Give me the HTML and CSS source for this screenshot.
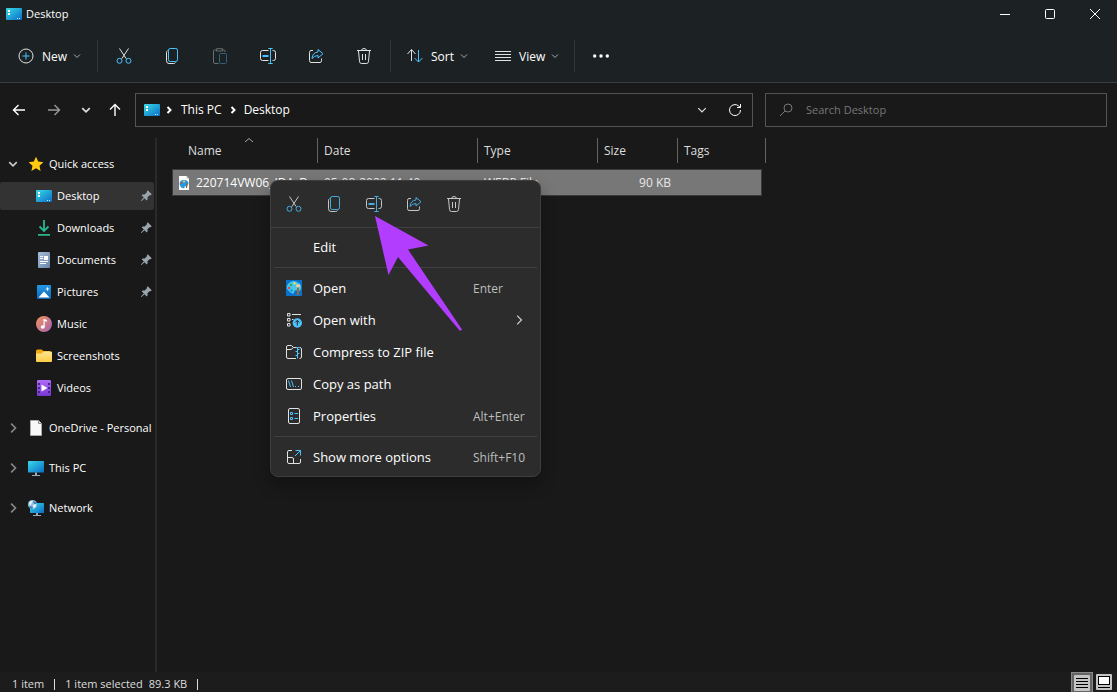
FILE: index.html
```html
<!DOCTYPE html>
<html lang="en">
<head>
<meta charset="utf-8">
<title>Desktop</title>
<link rel="stylesheet" href="styles.css">
</head>
<body>
<svg class="sprite" aria-hidden="true">
  <defs>
    <linearGradient id="g-screen" x1="0" y1="0" x2="1" y2="1"><stop offset="0" stop-color="#38dbe8"/><stop offset="1" stop-color="#0a6cc8"/></linearGradient>
    <linearGradient id="g-music" x1="0" y1="0" x2="1" y2="1"><stop offset="0" stop-color="#f5925a"/><stop offset="1" stop-color="#a562b4"/></linearGradient>
    <linearGradient id="g-doc" x1="0" y1="0" x2="1" y2="1"><stop offset="0" stop-color="#a9bfd8"/><stop offset="1" stop-color="#6784a8"/></linearGradient>
    <linearGradient id="g-pic" x1="0" y1="0" x2="0" y2="1"><stop offset="0" stop-color="#2598e8"/><stop offset="1" stop-color="#0967b8"/></linearGradient>
    <linearGradient id="g-folder" x1="0" y1="0" x2="0" y2="1"><stop offset="0" stop-color="#ffe592"/><stop offset="1" stop-color="#ffcd45"/></linearGradient>
    <linearGradient id="g-video" x1="0" y1="0" x2="0" y2="1"><stop offset="0" stop-color="#b06cf5"/><stop offset="1" stop-color="#7437cf"/></linearGradient>
    <symbol id="i-desktop" viewBox="0 0 16 16"><rect y="2" width="16" height="12" rx="1" fill="url(#g-screen)"/><path d="M2 4h2v2H2zM2 7h2v2H2z" fill="#fff"/><path d="M11 12h1v1h-1zM13 12h1v1h-1z" fill="#cfe9ff"/></symbol>
    <symbol id="i-plus" viewBox="0 0 16 16"><circle cx="8" cy="8" r="7" class="w"/><path d="M8 4.500v7M4.500 8h7" class="b"/></symbol>
    <symbol id="i-cut" viewBox="0 0 16 16"><path d="M3.5.5l6.700 10.200M12.500.5L5.800 10.700" class="w"/><circle cx="3.500" cy="12.800" r="2.500" class="b"/><circle cx="12.500" cy="12.800" r="2.500" class="b"/></symbol>
    <symbol id="i-copy" viewBox="0 0 16 16"><path d="M3.500 2.500Q2.500 3 2.500 4.800v8Q2.500 15.500 5 15.500h4.700Q11 15.500 11.500 14.500" class="w"/><rect x="4.500" y=".5" width="9" height="13" rx="1.700" class="b"/></symbol>
    <symbol id="i-paste" viewBox="0 0 16 16"><path d="M4.500 2H2.500Q1.500 2 1.500 3v11q0 1.500 1.500 1.500h3.500M10.500 2h1.500q1 0 1 1v1M4.500.700h6v2.300h-6z" stroke="#686d6f" fill="none"/><rect x="7.500" y="5.500" width="7" height="10" rx="1" stroke="#315f77" fill="none"/></symbol>
    <symbol id="i-rename" viewBox="0 0 16 16"><path d="M8.500 2.500H2.500Q.5 2.500.5 4.500v6q0 2 2 2h6M12.500 2.500h1q2 0 2 2v6q0 2-2 2h-1" class="w"/><path d="M8.300.5h4.400M8.300 15.500h4.400M10.500.5v15" class="b"/><path d="M2.500 8h6" class="b" stroke-width="2"/></symbol>
    <symbol id="i-share" viewBox="0 0 16 16"><path d="M5 2.500H3q-1.500 0-1.500 2v8q0 2 1.500 2h9q1.500 0 1.500-2v-2" class="w"/><path d="M10 1.500l5 4.200-5 4.300V7.500q-3.500 0-6 3 .5-6 6-6.500z" class="b"/></symbol>
    <symbol id="i-bin" viewBox="0 0 16 16"><path d="M1 2.500h14M5.500 2.500Q5.700.500 8 .500T10.500 2.500M2.500 3l1 10.500q.2 2 2 2h5q1.800 0 2-2l1-10.500M6.500 6v6M9.500 6v6" class="w"/></symbol>
    <symbol id="i-sort" viewBox="0 0 16 16"><path d="M4.500 13V2M.5 6l4-4.500 4 4.500" class="w"/><path d="M11.500 2v12M7.500 10l4 4 4-4" class="b"/></symbol>
    <symbol id="i-view" viewBox="0 0 16 16"><path d="M0 3.500h16M0 6.500h16M0 9.500h16M0 12.500h16" class="w"/></symbol>
    <symbol id="i-dots" viewBox="0 0 16 16"><circle cx="1.700" cy="8" r="1.700" fill="#fff"/><circle cx="8" cy="8" r="1.700" fill="#fff"/><circle cx="14.300" cy="8" r="1.700" fill="#fff"/></symbol>
    <symbol id="i-chev" viewBox="0 0 8 8"><path d="M1 2.500l3 3 3-3" class="c"/></symbol>
    <symbol id="i-right" viewBox="0 0 8 8"><path d="M2.500.5L6 4 2.500 7.500" class="c"/></symbol>
    <symbol id="i-crumb" viewBox="0 0 8 8"><path d="M2.500 1L5.500 4 2.500 7" class="c"/></symbol>
    <symbol id="i-left-arrow" viewBox="0 0 16 16"><path d="M14 8H2.500M7.500 3l-5 5 5 5" class="c"/></symbol>
    <symbol id="i-right-arrow" viewBox="0 0 16 16"><path d="M2 8h11.500M8.500 3l5 5-5 5" class="c"/></symbol>
    <symbol id="i-up-arrow" viewBox="0 0 16 16"><path d="M8 14V2.500M3 7.500l5-5 5 5" class="c"/></symbol>
    <symbol id="i-refresh" viewBox="0 0 16 16"><path d="M13.500 8A5.500 5.500 0 1 1 11.700 4l1.500 1.300M13.500 2v3.500H10" class="c"/></symbol>
    <symbol id="i-search" viewBox="0 0 16 16"><circle cx="10" cy="6" r="4" class="c"/><path d="M7 9l-5 5" class="c"/></symbol>
    <symbol id="i-star" viewBox="0 0 16 16"><path d="M8 .8l2.200 4.800 5.200.6-3.900 3.500 1.100 5.200L8 12.300l-4.600 2.600 1.100-5.200L.6 6.200l5.200-.6z" fill="#ffca10"/></symbol>
    <symbol id="i-pin" viewBox="0 0 16 16"><path d="M10 1.500l4.500 4.500-1 1-1-.2-2.800 2.700.1 2.500-1 1-2.500-2.500L3 13.800l-.8-.8 3.300-3.300L3 7.200l1-1 2.500.1L9.200 3.500l-.2-1z" fill="#98a5ad"/></symbol>
    <symbol id="i-down" viewBox="0 0 16 16"><path d="M8 0v11M3.500 6.500L8 11l4.500-4.500M2 14.800h12" stroke="#2bb78d" stroke-width="1.800" fill="none"/></symbol>
    <symbol id="i-doc" viewBox="0 0 16 16"><rect x="2" width="12" height="16" rx="1" fill="url(#g-doc)"/><path d="M4 4h3v1H4zM4 6h3v1H4zM8 4h4v4H8zM4 9h8v1H4zM4 11h6v1H4z" fill="#fff"/></symbol>
    <symbol id="i-pic" viewBox="0 0 16 16"><rect x="1" y="1" width="14" height="14" rx="1" fill="url(#g-pic)"/><path d="M2.500 13.500L8 7.500l5.500 6z" fill="#fff"/><path d="M11.500 2.500l.6 1.900 1.900.6-1.900.6-.6 1.900-.6-1.900L9 5l1.900-.6z" fill="#fff"/></symbol>
    <symbol id="i-music" viewBox="0 0 16 16"><circle cx="8" cy="8" r="8" fill="url(#g-music)"/><ellipse cx="6.700" cy="11" rx="2" ry="1.700" fill="#fff"/><path d="M7.500 3h1l2.500 1.300v1.500L8.700 5v6H7.500z" fill="#fff"/></symbol>
    <symbol id="i-folder" viewBox="0 0 16 16"><path d="M0 3q0-1.500 1.500-1.500h4L7.500 3H14v3H0z" fill="#f2a90c"/><path d="M0 5.500h5.500l2-2H15q1 0 1 1V13q0 1-1 1H1q-1 0-1-1z" fill="url(#g-folder)"/></symbol>
    <symbol id="i-video" viewBox="0 0 16 16"><rect x="1" width="14" height="16" rx="1" fill="url(#g-video)"/><path d="M2 3h2v2H2zM2 7h2v2H2zM2 11h2v2H2zM12 3h2v2h-2zM12 7h2v2h-2zM12 11h2v2h-2z" fill="#4b2092"/><path d="M5.500 4.500v7l6-3.500z" fill="#fff"/></symbol>
    <symbol id="i-page" viewBox="0 0 16 16"><path d="M2.500.5h8L13.500 3.500v12h-11z" fill="#f8f8f8" stroke="#aaa"/><path d="M10.500.5v3h3" fill="#ddd" stroke="#888"/></symbol>
    <symbol id="i-pc" viewBox="0 0 16 16"><rect y="1" width="16" height="11.500" rx=".5" fill="url(#g-screen)"/><path d="M7 12.500h2V15h3v1H4v-1h3z" fill="#9aa9b4"/></symbol>
    <symbol id="i-net" viewBox="0 0 16 16"><rect x="2" y="3" width="14" height="10" rx=".5" fill="url(#g-screen)"/><path d="M8 13h2v2h3v1H5v-1h3z" fill="#9aa9b4"/><circle cx="4.500" cy="4.500" r="4.500" fill="#8fc2e0"/><path d="M1 2.500Q3 0 5 1L3.500 3.500 2 6zM5 5l3-1q.5 3-2.500 4.500z" fill="#e1f3fc"/><path d="M5 1q3 .5 3.500 3L6 4zM2 6l3 1-1 2q-2-.5-3-2.500z" fill="#3b80b4"/></symbol>
    <symbol id="i-paint" viewBox="0 0 16 16"><rect width="16" height="16" fill="#0872cc"/><path d="M1 9Q0 4.500 4.500 2T14 4q2 3 .5 6-1 1.500-3 .5T8 11.500q.5 2.500-1.500 2T1 9z" fill="#42c7f3"/><circle cx="3" cy="8" r="1.200" fill="#e04b35"/><circle cx="5" cy="5" r="1.200" fill="#3da657"/><circle cx="8.500" cy="3.200" r="1.200" fill="#ffd34a"/><circle cx="5.500" cy="10.500" r="1" fill="#1573c4"/><path d="M11 7h2v8h-2z" fill="#a96524"/><path d="M10 4.500h4V6l-1 1.500h-2L10 6z" fill="#f1cf9a"/></symbol>
    <symbol id="i-webp" viewBox="0 0 16 16"><path d="M3 1h7.500L13 3.500V15H3z" fill="#fff"/><path d="M10.500 1v2.500H13" fill="#bbb"/><path d="M3.500 9q0-4 4.500-4t4.500 3.500Q12 11 10 11t-1.500 2q-4 1-5-4z" fill="#239bdd"/><circle cx="5.500" cy="8" r="1" fill="#e04b35"/><circle cx="8" cy="6.500" r="1" fill="#ffd34a"/><path d="M10 8.500h1.200V13H10z" fill="#93602c"/></symbol>
    <symbol id="i-openwith" viewBox="0 0 16 16"><path d="M1.500 1.500h2.500v2.500H1.500zM1.500 6.500h2.500V9H1.500zM1.500 11.500h2.500V14H1.500zM6 2.500h9M6 7.500h1.500" class="w"/><circle cx="11.300" cy="11" r="4.700" fill="#4cc2ff"/><path d="M11.300 13.500v-5M9.200 10.500l2.100-2.100 2.100 2.100" stroke="#202020" fill="none"/></symbol>
    <symbol id="i-zip" viewBox="0 0 16 16"><path d="M10 14.500H2q-1.500 0-1.500-1.500V3Q.5 1.500 2 1.500h3.500l2 2H10M.5 5.500H5l2.500-2M13.500 3.500q2 0 2 1.500v8q0 1.500-2 1.500" class="w"/><path d="M10 3.500h3.500M11.500 3.500v11M13.500 5.500h-2M9.500 7.500h2M13.500 9.500h-2M9.500 11.500h2" class="b"/></symbol>
    <symbol id="i-path" viewBox="0 0 16 16"><rect x=".5" y="2.500" width="15" height="11" rx="1.500" class="w"/><path d="M2.500 4.500l2 6.500M5.500 4.500l2 6.500M9 10.500h1M12 10.500h1" class="b"/></symbol>
    <symbol id="i-props" viewBox="0 0 16 16"><rect x="2.500" y=".5" width="11" height="15" rx="1.500" class="w"/><path d="M4.500 4.500h2v2h-2zM4.500 9.500h2v2h-2zM8.500 5.500h3.500M8.500 10.500h3.500" class="b"/></symbol>
    <symbol id="i-more" viewBox="0 0 16 16"><path d="M6 1.500H3q-1.500 0-1.500 1.500v10q0 1.500 1.500 1.500h10q1.500 0 1.500-1.500v-3M1.500 8.500H6q1.500 0 1.500 1.500v4.500" class="w"/><path d="M9 7l5.500-5.500M9.500 1.500h5v5" class="b"/></symbol>
  </defs>
</svg>

<header class="chrome">
  <div class="titlebar">
    <svg class="icon"><use href="#i-desktop"/></svg>
    <h1 class="title">Desktop</h1>
    <button class="win-btn" aria-label="Minimize"><svg class="glyph" viewBox="0 0 10 10"><path d="M0 5.500h10" class="c"/></svg></button>
    <button class="win-btn" aria-label="Maximize"><svg class="glyph" viewBox="0 0 10 10"><rect x=".5" y=".5" width="9" height="9" rx="1" class="c"/></svg></button>
    <button class="win-btn" aria-label="Close"><svg class="glyph" viewBox="0 0 10 10"><path d="M0 0l10 10M10 0L0 10" class="c"/></svg></button>
  </div>
  <div class="toolbar" role="toolbar">
    <button class="tool tool-new"><svg class="icon"><use href="#i-plus"/></svg><span>New</span><svg class="chev"><use href="#i-chev"/></svg></button>
    <span class="sep"></span>
    <button class="tool tool-icon" aria-label="Cut"><svg class="icon"><use href="#i-cut"/></svg></button>
    <button class="tool tool-icon" aria-label="Copy"><svg class="icon"><use href="#i-copy"/></svg></button>
    <button class="tool tool-icon" aria-label="Paste" disabled><svg class="icon"><use href="#i-paste"/></svg></button>
    <button class="tool tool-icon" aria-label="Rename"><svg class="icon"><use href="#i-rename"/></svg></button>
    <button class="tool tool-icon" aria-label="Share"><svg class="icon"><use href="#i-share"/></svg></button>
    <button class="tool tool-icon" aria-label="Delete"><svg class="icon"><use href="#i-bin"/></svg></button>
    <span class="sep"></span>
    <button class="tool tool-sort"><svg class="icon"><use href="#i-sort"/></svg><span>Sort</span><svg class="chev"><use href="#i-chev"/></svg></button>
    <button class="tool tool-view"><svg class="icon"><use href="#i-view"/></svg><span>View</span><svg class="chev"><use href="#i-chev"/></svg></button>
    <span class="sep"></span>
    <button class="tool tool-icon" aria-label="See more"><svg class="icon"><use href="#i-dots"/></svg></button>
  </div>
</header>

<div class="navbar">
  <nav class="history">
    <button class="nav-btn" aria-label="Back"><svg class="icon"><use href="#i-left-arrow"/></svg></button>
    <button class="nav-btn dim" aria-label="Forward"><svg class="icon"><use href="#i-right-arrow"/></svg></button>
    <button class="nav-btn narrow" aria-label="Recent locations"><svg class="chev big"><use href="#i-chev"/></svg></button>
    <button class="nav-btn narrow" aria-label="Up"><svg class="icon"><use href="#i-up-arrow"/></svg></button>
  </nav>
  <div class="address">
    <svg class="icon"><use href="#i-desktop"/></svg>
    <svg class="chev bold"><use href="#i-crumb"/></svg>
    <a class="crumb" href="#">This PC</a>
    <svg class="chev bold"><use href="#i-crumb"/></svg>
    <a class="crumb" href="#">Desktop</a>
    <button class="addr-btn first" aria-label="Previous locations"><svg class="chev big"><use href="#i-chev"/></svg></button>
    <button class="addr-btn" aria-label="Refresh"><svg class="icon"><use href="#i-refresh"/></svg></button>
  </div>
  <label class="search">
    <svg class="icon"><use href="#i-search"/></svg>
    <input class="search-input" type="search" placeholder="Search Desktop" aria-label="Search Desktop">
  </label>
</div>

<main class="main">
  <aside class="sidebar">
    <div class="group">
      <a class="node" href="#"><svg class="chev big open"><use href="#i-chev"/></svg><svg class="icon"><use href="#i-star"/></svg><span>Quick access</span></a>
      <a class="node child active" href="#"><svg class="icon"><use href="#i-desktop"/></svg><span>Desktop</span><svg class="pin"><use href="#i-pin"/></svg></a>
      <a class="node child" href="#"><svg class="icon"><use href="#i-down"/></svg><span>Downloads</span><svg class="pin"><use href="#i-pin"/></svg></a>
      <a class="node child" href="#"><svg class="icon"><use href="#i-doc"/></svg><span>Documents</span><svg class="pin"><use href="#i-pin"/></svg></a>
      <a class="node child" href="#"><svg class="icon"><use href="#i-pic"/></svg><span>Pictures</span><svg class="pin"><use href="#i-pin"/></svg></a>
      <a class="node child" href="#"><svg class="icon"><use href="#i-music"/></svg><span>Music</span></a>
      <a class="node child" href="#"><svg class="icon"><use href="#i-folder"/></svg><span>Screenshots</span></a>
      <a class="node child" href="#"><svg class="icon"><use href="#i-video"/></svg><span>Videos</span></a>
    </div>
    <a class="node" href="#"><svg class="chev big"><use href="#i-right"/></svg><svg class="icon"><use href="#i-page"/></svg><span>OneDrive - Personal</span></a>
    <a class="node" href="#"><svg class="chev big"><use href="#i-right"/></svg><svg class="icon"><use href="#i-pc"/></svg><span>This PC</span></a>
    <a class="node" href="#"><svg class="chev big"><use href="#i-right"/></svg><svg class="icon"><use href="#i-net"/></svg><span>Network</span></a>
  </aside>

  <section class="files">
    <table class="list">
      <colgroup><col class="col-name"><col class="col-date"><col class="col-type"><col class="col-size"><col class="col-tags"><col class="col-end"></colgroup>
      <thead>
        <tr><th class="sorted">Name<svg class="sort-mark" viewBox="0 0 8 4"><path d="M0 4l4-3.500L8 4" class="c"/></svg></th><th>Date</th><th>Type</th><th>Size</th><th class="last">Tags</th><th class="end"></th></tr>
      </thead>
      <tbody>
        <tr><td class="name"><div class="file"><svg class="icon"><use href="#i-webp"/></svg><span>220714VW06_IDA_D...</span></div></td><td>05-08-2022 11:40</td><td>WEBP File</td><td class="size">90 KB</td><td class="tags"></td><td class="end"></td></tr>
      </tbody>
    </table>

    <div class="menu" role="menu">
      <div class="quick">
        <button class="quick-btn" aria-label="Cut"><svg class="icon"><use href="#i-cut"/></svg></button>
        <button class="quick-btn" aria-label="Copy"><svg class="icon"><use href="#i-copy"/></svg></button>
        <button class="quick-btn" aria-label="Rename"><svg class="icon"><use href="#i-rename"/></svg></button>
        <button class="quick-btn" aria-label="Share"><svg class="icon"><use href="#i-share"/></svg></button>
        <button class="quick-btn" aria-label="Delete"><svg class="icon"><use href="#i-bin"/></svg></button>
      </div>
      <div class="items">
        <button class="item" role="menuitem"><span></span><span>Edit</span></button>
        <hr class="rule">
        <button class="item" role="menuitem"><svg class="icon"><use href="#i-paint"/></svg><span>Open</span><kbd class="key">Enter</kbd></button>
        <button class="item" role="menuitem"><svg class="icon"><use href="#i-openwith"/></svg><span>Open with</span><svg class="submenu"><use href="#i-right"/></svg></button>
        <button class="item" role="menuitem"><svg class="icon"><use href="#i-zip"/></svg><span>Compress to ZIP file</span></button>
        <button class="item" role="menuitem"><svg class="icon"><use href="#i-path"/></svg><span>Copy as path</span></button>
        <button class="item" role="menuitem"><svg class="icon"><use href="#i-props"/></svg><span>Properties</span><kbd class="key">Alt+Enter</kbd></button>
        <hr class="rule">
        <button class="item" role="menuitem"><svg class="icon"><use href="#i-more"/></svg><span>Show more options</span><kbd class="key">Shift+F10</kbd></button>
      </div>
      <svg class="pointer" viewBox="0 0 88 116" aria-hidden="true"><path d="M0 0l53.500 29.500-20.500 4 54 80-2 1.500L23 41 13.500 59z" fill="#b23dff"/></svg>
    </div>
  </section>
</main>

<footer class="status">
  <span>1 item</span><span class="bar"></span><span>1 item selected</span><span class="bytes">89.3 KB</span><span class="bar"></span>
  <button class="view-btn on" aria-label="Details view"><svg class="view-icon" viewBox="0 0 16 16"><rect width="16" height="16" rx="1" fill="#c4c4c4"/><path d="M2 3.500h12M2 6.500h12M2 9.500h12M2 12.500h12" stroke="#000"/></svg></button>
  <button class="view-btn" aria-label="Large thumbnails"><svg class="view-icon" viewBox="0 0 16 16"><rect width="16" height="16" rx="1" fill="#c4c4c4"/><rect x="2.500" y="2.500" width="11" height="8" fill="#fff" stroke="#000"/><path d="M2 13.500h12" stroke="#000"/></svg></button>
</footer>
</body>
</html>
```
FILE: styles.css
```css
* { box-sizing: border-box; }

body {
  margin: 0;
  min-height: 100vh;
  display: flex;
  flex-direction: column;
  background: #191919;
  color: #fff;
  font: 11px/16px "Open Sans", "Noto Sans", sans-serif;
}

button {
  display: flex;
  align-items: center;
  padding: 0;
  border: 0;
  background: none;
  color: inherit;
  font: inherit;
}

a { color: inherit; text-decoration: none; }

.sprite { position: absolute; width: 0; height: 0; }
.icon { width: 16px; height: 16px; flex: none; }
.chev { width: 8px; height: 8px; flex: none; color: #a8adaf; }
.chev.big { width: 10px; height: 10px; color: #ddd; }
.chev.bold { color: #fff; stroke-width: 2; }
.w { fill: none; stroke: #e2e2e2; }
.b { fill: none; stroke: #4cc2ff; }
.c { fill: none; stroke: currentColor; }

/* Title bar and command bar */
.chrome { background: #1c2224; border-bottom: 1px solid #3b3d3e; }
.titlebar { display: flex; align-items: center; height: 28px; padding-left: 6px; }
.title { flex: 1; margin: 0 0 0 4px; font-size: 11px; font-weight: 400; }
.win-btn { width: 45px; height: 28px; justify-content: center; }
.glyph { width: 10px; height: 10px; overflow: visible; }

.toolbar { display: flex; align-items: center; height: 54px; padding: 2px 0 0 18px; }
.tool { height: 32px; gap: 8px; font-size: 12px; font-weight: 500; }
.tool > span { padding-top: 1px; }
.tool-new { width: 77px; }
.tool-sort { width: 88px; margin-left: 14px; }
.tool-view { width: 77px; }
.tool-icon { width: 48px; justify-content: center; }
.tool .chev { margin-left: -2px; }
.sep { width: 1px; height: 32px; margin: 0 2px; background: #303638; }

/* Address row */
.navbar { display: grid; grid-template-columns: 135px 618fr 354fr; padding: 10px 10px 9px 0; }
.history { display: flex; align-items: center; padding-left: 1px; }
.nav-btn { width: 35px; height: 32px; justify-content: center; stroke-width: 1.4; }
.nav-btn.narrow { width: 29px; }
.nav-btn.dim { color: #999; }
.address { display: flex; align-items: center; height: 34px; padding: 0 9px 0 8px; border: 1px solid #535353; }
.crumb { font-size: 12px; }
.address > .chev { margin: 0 8px 0 5px; }
.address > .crumb + .chev { margin: 0 7px; }
.addr-btn { width: 33px; height: 32px; justify-content: center; }
.addr-btn.first { margin-left: auto; }
.addr-btn:last-child { width: 17px; margin-left: 8px; }
.search { display: flex; align-items: center; gap: 12px; height: 34px; margin-left: 12px; padding: 0 12px; border: 1px solid #535353; color: #777; }
.search-input { flex: 1; min-width: 0; padding: 0; border: 0; outline: 0; background: none; color: #fff; font: inherit; }
.search-input::placeholder { color: #777; opacity: 1; }

/* Body */
.main { flex: 1; display: flex; padding-top: 2px; }
.sidebar { width: 157px; flex: none; display: flex; flex-direction: column; gap: 12px; padding: 12px 1px 0 0; border-right: 2px solid #2a2a2a; }
.group { display: flex; flex-direction: column; gap: 4px; }
.node { display: flex; align-items: center; gap: 5px; height: 28px; padding-left: 8px; white-space: nowrap; }
.node .chev { margin-right: 5px; color: #888; stroke-width: 1.3; }
.node .chev.open { color: #ccc; }
.node.child { padding-left: 36px; }
.node.active { background: #333; border-radius: 2px; }
.pin { width: 14px; height: 14px; margin: 0 1px 0 auto; }

.files { flex: 1; position: relative; padding-left: 15px; font-size: 12px; }
.list { table-layout: fixed; width: 594px; border-spacing: 0; }
.col-name { width: 146px; }
.col-date { width: 160px; }
.col-type { width: 120px; }
.col-size { width: 80px; }
.col-tags { width: 84px; }
.col-end { width: 4px; }
.list th { position: relative; height: 25px; padding: 0 0 0 6px; border-right: 1px solid #636363; font-weight: 400; text-align: left; color: #dedede; }
.list .sorted { padding-left: 16px; }
.list .last { border-right: 0; }
.list .end { padding: 0; border-right: 1px solid #636363; }
.sort-mark { position: absolute; top: 0; left: 73px; width: 8px; height: 4px; color: #aaa; }
.list tbody::before { content: ""; display: block; height: 6px; }
.list td { height: 27px; padding: 0 0 0 6px; background: #777; border: 1px solid #3a3a3a; border-width: 1px 0; color: #e8e8e8; white-space: nowrap; }
.list .name { padding-left: 3px; border-left-width: 1px; }
.list .tags { border-right-width: 1px; }
.list .size { padding: 0 7px 0 0; text-align: right; }
.list td.end { background: none; border: 0; }
.file { display: flex; align-items: center; gap: 4px; overflow: hidden; color: #fff; }

/* Context menu */
.menu { position: absolute; top: 42px; left: 113px; width: 271px; border: 1px solid #3e3e3e; border-radius: 8px; background: #2c2c2c; box-shadow: 0 8px 16px rgba(0, 0, 0, .3); font-size: 13px; line-height: 20px; }
.quick { display: flex; height: 47px; padding: 3px 3px 4px; border-bottom: 1px solid #404040; }
.quick-btn { width: 40px; justify-content: center; opacity: .85; }
.items { padding: 3px; }
.item { display: grid; grid-template-columns: 16px 149px 1fr; column-gap: 11px; width: 100%; height: 32px; padding-left: 12px; text-align: left; white-space: nowrap; }
.rule { height: 1px; margin: 4px 0; border: 0; background: #404040; }
.key { padding-top: 2px; color: #bdbdbd; font: 12px/16px "Open Sans", "Noto Sans", sans-serif; }
.submenu { width: 10px; height: 10px; margin-left: 41px; color: #ccc; }
.pointer { position: absolute; top: 35px; left: 104px; width: 88px; height: 116px; pointer-events: none; }

/* Status bar */
.status { display: flex; align-items: center; height: 20px; padding: 0 2px 0 12px; background: #1c1c1c; color: #ddd; line-height: 20px; }
.status > span { padding-top: 3px; }
.bar { width: 1px; height: 11px; margin: 4px 10px 0; background: #ddd; }
.bytes { margin-left: 6px; }
.view-btn { width: 22px; height: 20px; justify-content: center; }
.view-btn.on { margin-left: auto; background: #646464; border: 1px solid #888; border-bottom: 0; }
.view-icon { width: 16px; height: 16px; }
```
